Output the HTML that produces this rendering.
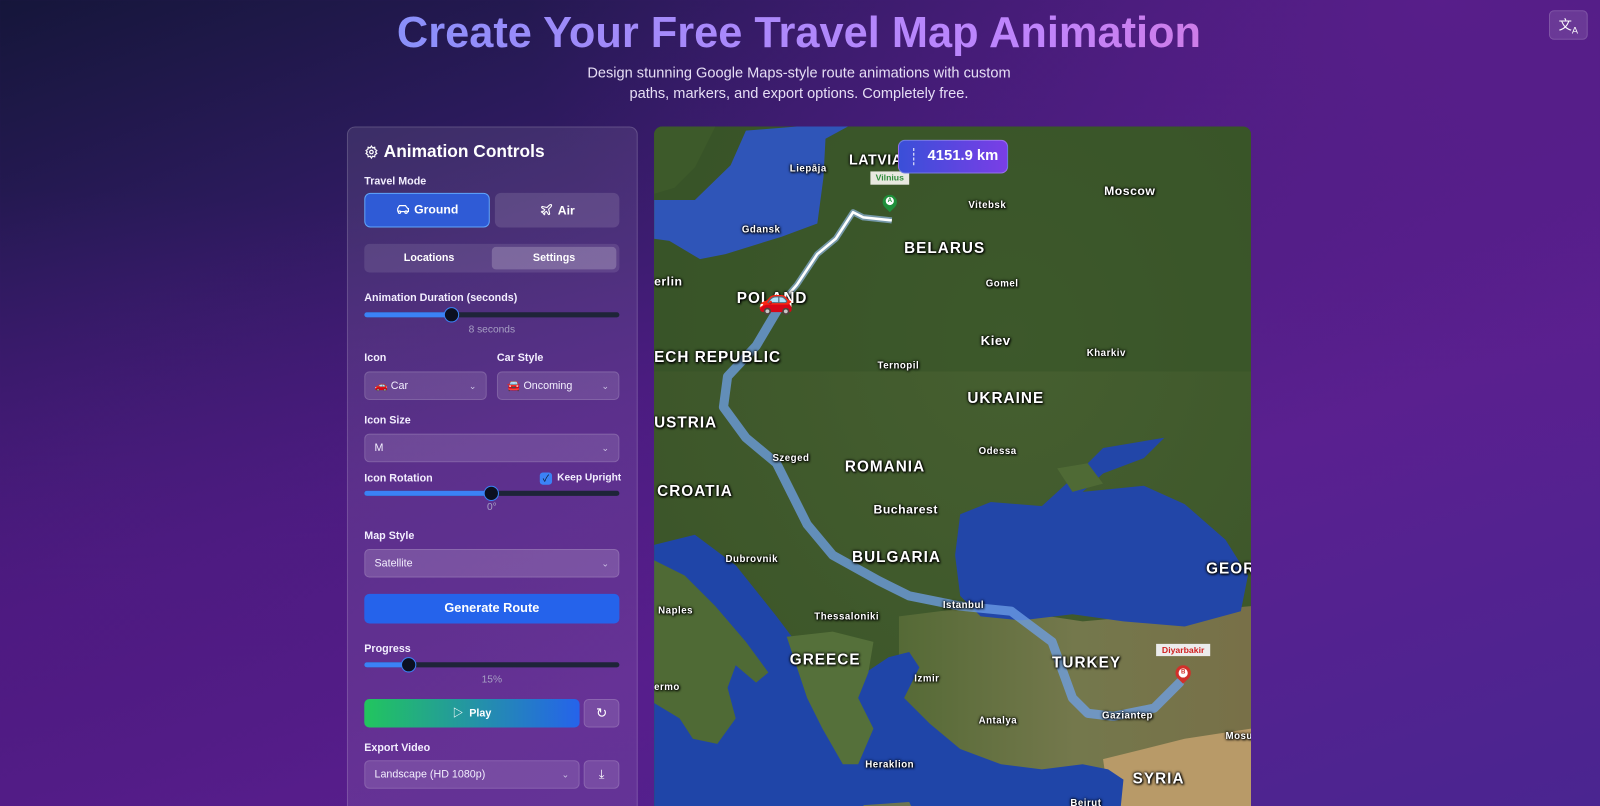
<!DOCTYPE html>
<html><head><meta charset="utf-8"><style>
*{box-sizing:border-box;margin:0;padding:0}
html,body{width:1600px;height:806px;overflow:hidden}
body{font-family:"Liberation Sans","Noto Sans CJK SC",sans-serif;color:#fff;position:relative;
background:linear-gradient(160deg,#15163a 0%,#2a1a5a 20%,#4a1d80 45%,#5a2090 65%,#4a2590 100%);}
.bgov{position:absolute;inset:0;background:radial-gradient(ellipse at 90% 0%,rgba(90,30,140,.9),transparent 45%),radial-gradient(ellipse at 0% 80%,rgba(80,25,130,.7),transparent 50%);}
#w{position:absolute;left:0;top:0;width:1568px;height:790px;transform:scale(1.0204);transform-origin:0 0}
h1{position:absolute;left:0;width:1566px;top:9px;text-align:center;font-size:42.5px;font-weight:700;
background:linear-gradient(90deg,#5b9cf8 0%,#9d8bfa 35%,#c084fc 65%,#f06bb8 100%);-webkit-background-clip:text;background-clip:text;color:transparent}
.sub{position:absolute;left:0;width:1566px;top:63px;text-align:center;font-size:14.3px;line-height:19.5px;color:#e6def5}
.tr{position:absolute;left:1518px;top:10px;width:38px;height:29px;border-radius:5px;background:rgba(255,255,255,.12);border:1px solid rgba(255,255,255,.15);font-size:13px;text-align:center;line-height:27px}
.panel{position:absolute;left:340px;top:124px;width:285px;height:700px;border-radius:8px;background:rgba(255,255,255,.09);border:1px solid rgba(255,255,255,.16)}
.a{position:absolute}
.lbl{position:absolute;font-size:10.5px;font-weight:700;color:#f3efff}
.sel{position:absolute;height:28px;border-radius:5px;background:rgba(255,255,255,.12);border:1px solid rgba(255,255,255,.14);font-size:10.5px;line-height:26px;padding-left:9px;color:#f4f0ff}
.sel .ch{position:absolute;right:9px;top:0;font-size:9px;color:#cfc6e6}
.track{position:absolute;height:5px;border-radius:3px;background:#1e2438;left:357px;width:250px}
.fill{position:absolute;height:5px;border-radius:3px;background:#3b82f6;left:0;top:0}
.thumb{position:absolute;width:15px;height:15px;border-radius:50%;background:#0b1020;border:1.5px solid #3b82f6;top:-5px}
.sm{position:absolute;font-size:10px;color:#a7a0c4;text-align:center}
.map{position:absolute;left:641px;top:124px;width:585px;height:690px;border-radius:8px;overflow:hidden;background:#3d5a2a}
.ml{position:absolute;font-weight:700;color:#fff;text-shadow:0 0 2px #000,0 0 3px #000,1px 1px 2px #000;white-space:nowrap;letter-spacing:.5px}
.big{font-size:15px;letter-spacing:1px}
.city{font-size:9.5px}
</style></head><body>
<div class="bgov"></div>
<div id="w">
<h1>Create Your Free Travel Map Animation</h1>
<div class="sub">Design stunning Google Maps-style route animations with custom<br>paths, markers, and export options. Completely free.</div>
<div class="tr">文<sub style="font-size:9px">A</sub></div>

<div class="panel"></div>
<svg class="a" style="left:357px;top:142px" width="14" height="14" viewBox="0 0 24 24" fill="none" stroke="#fff" stroke-width="2"><circle cx="12" cy="12" r="3"/><path d="M12 2l2 3 3.5-1 .5 3.5 3 2-2 2.5 2 2.5-3 2-.5 3.5-3.5-1-2 3-2-3-3.5 1-.5-3.5-3-2 2-2.5-2-2.5 3-2 .5-3.5 3.5 1z"/></svg>
<div class="a" style="left:376px;top:139px;font-size:17px;font-weight:700">Animation Controls</div>
<div class="lbl" style="left:357px;top:172px">Travel Mode</div>
<div class="a" style="left:357px;top:189px;width:123px;height:34px;border-radius:6px;background:#2f5bd6;border:1.5px solid #60a5fa;font-size:12px;font-weight:700;text-align:center;line-height:31px">
<svg width="14" height="12" viewBox="0 0 24 20" fill="none" stroke="#fff" stroke-width="2" style="vertical-align:-2px;margin-right:4px"><path d="M3 14V9l3-5h10l4 5h1v5h-2M7 14h8"/><circle cx="6" cy="15" r="2"/><circle cx="17" cy="15" r="2"/></svg>Ground</div>
<div class="a" style="left:485px;top:189px;width:122px;height:34px;border-radius:6px;background:rgba(255,255,255,.12);font-size:12px;font-weight:700;text-align:center;line-height:34px">
<svg width="13" height="13" viewBox="0 0 24 24" fill="none" stroke="#fff" stroke-width="2" style="vertical-align:-2px;margin-right:5px"><path d="M17.8 19.2L16 11l3.5-3.5C21 6 21.5 4 21 3c-1-.5-3 0-4.5 1.5L13 8 4.8 6.2c-.5-.1-.9.1-1.1.5l-.3.5c-.2.5-.1 1 .3 1.3L9 12l-2 3H4l-1 1 3 2 2 3 1-1v-3l3-2 3.5 5.3c.3.4.8.5 1.3.3l.5-.2c.4-.3.6-.7.5-1.2z"/></svg>Air</div>
<div class="a" style="left:357px;top:239px;width:250px;height:28px;border-radius:5px;background:rgba(255,255,255,.1)"></div>
<div class="a" style="left:482px;top:242px;width:122px;height:22px;border-radius:4px;background:rgba(255,255,255,.2)"></div>
<div class="a" style="left:357px;top:247px;width:127px;text-align:center;font-size:10.5px;font-weight:700">Locations</div>
<div class="a" style="left:482px;top:247px;width:122px;text-align:center;font-size:10.5px;font-weight:700">Settings</div>

<div class="lbl" style="left:357px;top:286px">Animation Duration (seconds)</div>
<div class="track" style="top:306px"><div class="fill" style="width:86px"></div><div class="thumb" style="left:78px"></div></div>
<div class="sm" style="left:357px;width:250px;top:318px">8 seconds</div>

<div class="lbl" style="left:357px;top:345px">Icon</div>
<div class="lbl" style="left:487px;top:345px">Car Style</div>
<div class="sel" style="left:357px;top:364px;width:120px">🚗 Car<span class="ch">⌄</span></div>
<div class="sel" style="left:487px;top:364px;width:120px">🚘 Oncoming<span class="ch">⌄</span></div>
<div class="lbl" style="left:357px;top:406px">Icon Size</div>
<div class="sel" style="left:357px;top:425px;width:250px">M<span class="ch">⌄</span></div>

<div class="lbl" style="left:357px;top:463px">Icon Rotation</div>
<div class="a" style="left:529px;top:463px;width:12px;height:12px;border-radius:3px;background:#3b82f6;font-size:9px;line-height:12px;text-align:center;color:#0b1020">✓</div>
<div class="lbl" style="left:546px;top:463px;font-size:10px">Keep Upright</div>
<div class="track" style="top:481px"><div class="fill" style="width:125px"></div><div class="thumb" style="left:117px"></div></div>
<div class="sm" style="left:357px;width:250px;top:492px">0°</div>

<div class="lbl" style="left:357px;top:519px">Map Style</div>
<div class="sel" style="left:357px;top:538px;width:250px;background:rgba(255,255,255,.16)">Satellite<span class="ch">⌄</span></div>
<div class="a" style="left:357px;top:582px;width:250px;height:29px;border-radius:5px;background:#2563eb;font-size:12.5px;font-weight:700;text-align:center;line-height:29px">Generate Route</div>

<div class="lbl" style="left:357px;top:630px">Progress</div>
<div class="track" style="top:649px"><div class="fill" style="width:43px"></div><div class="thumb" style="left:36px"></div></div>
<div class="sm" style="left:357px;width:250px;top:661px">15%</div>
<div class="a" style="left:357px;top:685px;width:211px;height:28px;border-radius:5px;background:linear-gradient(90deg,#22c55e,#2563eb);font-size:10.5px;font-weight:700;text-align:center;line-height:28px">▷&nbsp; Play</div>
<div class="a" style="left:572px;top:685px;width:35px;height:28px;border-radius:5px;background:rgba(255,255,255,.12);border:1px solid rgba(255,255,255,.15);text-align:center;line-height:26px;font-size:13px">↻</div>
<div class="lbl" style="left:357px;top:727px">Export Video</div>
<div class="sel" style="left:357px;top:745px;width:211px">Landscape (HD 1080p)<span class="ch">⌄</span></div>
<div class="a" style="left:572px;top:745px;width:35px;height:28px;border-radius:5px;background:rgba(255,255,255,.12);border:1px solid rgba(255,255,255,.15);text-align:center;line-height:26px;font-size:12px">⤓</div>

<div class="map">
<svg width="585" height="690" style="position:absolute;left:0;top:0">
<defs>
<radialGradient id="g1" cx="0.6" cy="0.3" r="0.8"><stop offset="0" stop-color="#465f30"/><stop offset="1" stop-color="#3a5428"/></radialGradient>
<linearGradient id="ty" x1="0" y1="0" x2="1" y2="0"><stop offset="0" stop-color="#556a36"/><stop offset="0.5" stop-color="#74784c"/><stop offset="1" stop-color="#787048"/></linearGradient>
</defs>
<rect width="585" height="690" fill="url(#g1)"/>
<rect x="0" y="0" width="585" height="240" fill="#335226" opacity=".5"/>
<polygon fill="#2f55b8" points="0,72 40,72 75,38 90,4 140,0 190,0 168,12 166,50 160,95 125,108 70,125 45,130 15,112 0,110"/>
<polygon fill="#3d5a2a" points="0,0 60,0 40,40 20,60 0,66"/>
<polygon fill="url(#ty)" points="240,480 320,470 420,485 585,470 585,690 240,690"/>
<polygon fill="#b89a68" points="440,620 520,600 585,590 585,690 450,690"/>
<polygon fill="#1f45a8" points="0,410 40,400 80,430 120,480 150,520 170,545 200,540 230,520 250,515 260,530 245,560 270,585 300,610 340,625 380,630 420,625 445,630 460,640 455,690 0,690"/>
<polygon fill="#4f6a35" points="0,425 30,440 60,470 90,505 112,535 100,545 80,528 72,550 80,580 62,605 38,600 25,580 0,565"/>
<polygon fill="#55703a" points="130,500 175,495 215,505 210,535 200,560 215,590 200,625 185,625 165,590 150,560 140,530"/>
<polygon fill="#6d7550" points="205,665 250,662 255,672 210,675"/>
<polygon fill="#7a7a55" points="395,685 430,672 420,690 395,690"/>
<polygon fill="#2246a8" points="300,380 330,368 380,372 415,340 440,315 500,305 480,325 440,340 420,358 480,352 520,370 560,405 582,440 575,475 520,490 460,485 410,478 360,484 320,480 300,460 295,420"/>
<polygon fill="#4f6a35" points="395,335 425,330 440,350 410,358"/>
<polyline fill="none" stroke="#6fa0e8" stroke-opacity=".75" stroke-width="9" stroke-linejoin="round" stroke-linecap="round" points="122,178 100,215 72,245 68,275 90,305 120,330 150,390 175,420 220,445 250,460 300,470 350,475 390,505 410,560 425,575 450,578 490,570 515,545"/>
<polyline fill="none" stroke="#9cc4ff" stroke-width="6" opacity=".6" stroke-linejoin="round" points="122,176 140,155 160,125 178,110 195,84 205,89 233,92"/>
<polyline fill="none" stroke="#fff" stroke-width="2.5" stroke-linejoin="round" points="122,176 140,155 160,125 178,110 195,84 205,89 233,92"/>
</svg>
<div class="ml" style="left:191px;top:24px;font-size:14px">LATVIA</div>
<div class="ml city" style="left:133px;top:36px">Liepāja</div>
<div class="a" style="left:212px;top:44px;width:38px;height:13px;background:#e8e8e0;color:#2e8b3a;font-size:8.5px;font-weight:700;text-align:center;line-height:13px">Vilnius</div>
<div class="a" style="left:224px;top:67px;width:14px;height:14px;border-radius:50% 50% 50% 0;transform:rotate(-45deg);background:#1f8f3a"></div>
<div class="a" style="left:227px;top:69px;width:8px;height:8px;border-radius:50%;background:#fff;color:#1f8f3a;font-size:6px;font-weight:700;text-align:center;line-height:8px">A</div>
<div class="ml" style="left:441px;top:56px;font-size:12px">Moscow</div>
<div class="ml city" style="left:308px;top:72px">Vitebsk</div>
<div class="ml city" style="left:86px;top:96px">Gdansk</div>
<div class="ml big" style="left:245px;top:111px">BELARUS</div>
<div class="ml city" style="left:325px;top:149px">Gomel</div>
<div class="ml" style="left:0px;top:145px;font-size:12px">erlin</div>
<div class="ml big" style="left:81px;top:160px">POLAND</div>
<div class="a" style="left:102px;top:155px;font-size:28px;line-height:30px">🚗</div>
<div class="ml" style="left:320px;top:202px;font-size:13px">Kiev</div>
<div class="ml city" style="left:424px;top:217px">Kharkiv</div>
<div class="ml big" style="left:0px;top:218px">ECH REPUBLIC</div>
<div class="ml city" style="left:219px;top:229px">Ternopil</div>
<div class="ml big" style="left:307px;top:258px">UKRAINE</div>
<div class="ml big" style="left:0px;top:282px">USTRIA</div>
<div class="ml city" style="left:116px;top:320px">Szeged</div>
<div class="ml city" style="left:318px;top:313px">Odessa</div>
<div class="ml big" style="left:187px;top:325px">ROMANIA</div>
<div class="ml big" style="left:3px;top:349px">CROATIA</div>
<div class="ml" style="left:215px;top:368px;font-size:12px">Bucharest</div>
<div class="ml city" style="left:70px;top:419px">Dubrovnik</div>
<div class="ml big" style="left:194px;top:414px">BULGARIA</div>
<div class="ml big" style="left:541px;top:425px">GEOR</div>
<div class="ml city" style="left:4px;top:469px">Naples</div>
<div class="ml city" style="left:283px;top:464px">Istanbul</div>
<div class="ml city" style="left:157px;top:475px">Thessaloniki</div>
<div class="ml big" style="left:133px;top:514px">GREECE</div>
<div class="ml big" style="left:390px;top:517px">TURKEY</div>
<div class="a" style="left:492px;top:507px;width:53px;height:12px;background:#ececec;color:#d02020;font-size:8.5px;font-weight:700;text-align:center;line-height:12px">Diyarbakir</div>
<div class="a" style="left:511px;top:528px;width:15px;height:15px;border-radius:50% 50% 50% 0;transform:rotate(-45deg);background:#d0302a"></div>
<div class="a" style="left:514px;top:531px;width:9px;height:9px;border-radius:50%;background:#fff;color:#d0302a;font-size:6px;font-weight:700;text-align:center;line-height:9px">B</div>
<div class="ml city" style="left:255px;top:536px">Izmir</div>
<div class="ml city" style="left:0px;top:544px">ermo</div>
<div class="ml city" style="left:439px;top:572px">Gaziantep</div>
<div class="ml city" style="left:318px;top:577px">Antalya</div>
<div class="ml city" style="left:560px;top:592px">Mosu</div>
<div class="ml city" style="left:207px;top:620px">Heraklion</div>
<div class="ml big" style="left:469px;top:631px">SYRIA</div>
<div class="ml city" style="left:408px;top:658px">Beirut</div>
</div>
<div class="a" style="left:880px;top:137px;width:108px;height:33px;border-radius:7px;background:linear-gradient(90deg,#3a4fd8,#7a3ee6);border:1px solid rgba(255,255,255,.25)"></div>
<div class="a" style="left:895px;top:145px;width:0;height:17px;border-left:1.5px dashed #fff"></div>
<div class="a" style="left:909px;top:145px;font-size:14.5px;font-weight:700">4151.9 km</div>
</div>
</body></html>
